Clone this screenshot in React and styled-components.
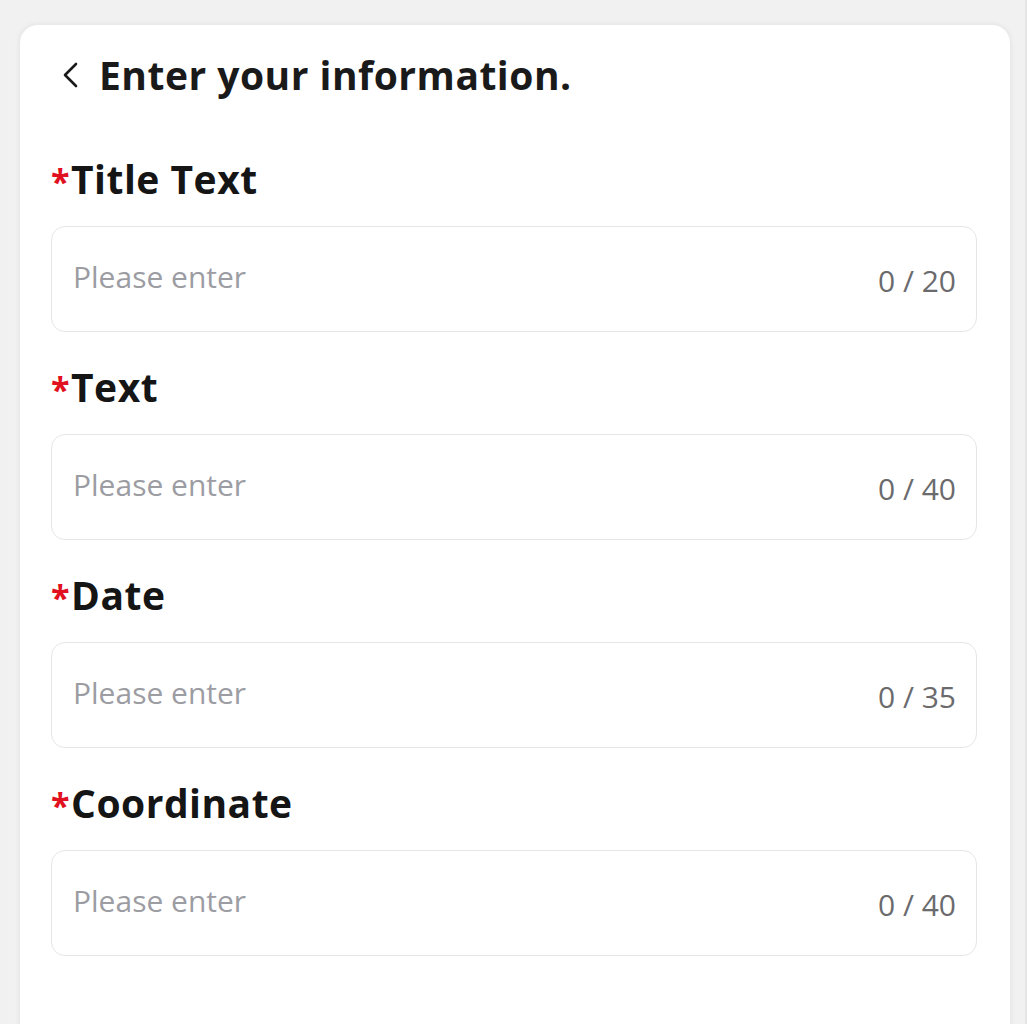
import React from "react";
import styled, { createGlobalStyle } from "styled-components";

const Global = createGlobalStyle`
  html, body { margin: 0; padding: 0; background: #f1f1f1; }
  body { font-family: "Open Sans", "Noto Sans", sans-serif; }
`;

const Page = styled.div`
  padding: 25px 15px 0 20px;
  height: 1024px;
  box-sizing: border-box;
  overflow: hidden;
  border-right: 2px solid #e6e6e6;
`;

const Card = styled.div`
  background: #fff;
  border-radius: 18px 18px 0 0;
  box-shadow: 0 0 6px rgba(0, 0, 0, 0.08);
  min-height: 1100px;
  padding: 24px 33px 0 31px;
  box-sizing: border-box;
`;

const Header = styled.div`
  display: flex;
  align-items: center;
  gap: 21px;
  padding-left: 11px;
  height: 52px;
`;

const Title = styled.h1`
  margin: 0;
  font-size: 39px;
  line-height: 52px;
  font-weight: 700;
  color: #1a1a1a;
  letter-spacing: 0.5px;
`;

const Field = styled.div`
  margin-top: ${(p) => (p.$first ? "53px" : "30px")};
`;

const Label = styled.div`
  font-size: 39px;
  font-weight: 700;
  color: #151515;
  line-height: 50px;
  letter-spacing: 0.5px;
  display: flex;
  align-items: baseline;
`;

const Star = styled.span`
  color: #e0101e;
  font-size: 34px;
  margin-right: 1px;
`;

const InputBox = styled.div`
  margin-top: 20px;
  height: 106px;
  box-sizing: border-box;
  border: 1.5px solid #e6e6e8;
  border-radius: 14px;
  display: flex;
  align-items: center;
  justify-content: space-between;
  padding: 0 20px 0 21px;
`;

const Placeholder = styled.span`
  font-size: 30px;
  color: #9c9ca3;
  font-weight: 400;
  margin-top: -6px;
`;

const Counter = styled.span`
  font-size: 30px;
  color: #6b6b6e;
  margin-top: 2px;
`;

const Back = () => (
  <svg width="16" height="26" viewBox="0 0 16 26" fill="none">
    <path d="M14 2 L3 13 L14 24" stroke="#1a1a1a" strokeWidth="2.6" strokeLinecap="round" strokeLinejoin="round" />
  </svg>
);

const fields = [
  { label: "Title Text", max: 20 },
  { label: "Text", max: 40 },
  { label: "Date", max: 35 },
  { label: "Coordinate", max: 40 },
];

export default function App() {
  return (
    <>
      <Global />
      <Page>
        <Card>
          <Header>
            <Back />
            <Title>Enter your information.</Title>
          </Header>
          {fields.map((f, i) => (
            <Field key={f.label} $first={i === 0}>
              <Label>
                <Star>*</Star>
                {f.label}
              </Label>
              <InputBox>
                <Placeholder>Please enter</Placeholder>
                <Counter>0 / {f.max}</Counter>
              </InputBox>
            </Field>
          ))}
        </Card>
      </Page>
    </>
  );
}
